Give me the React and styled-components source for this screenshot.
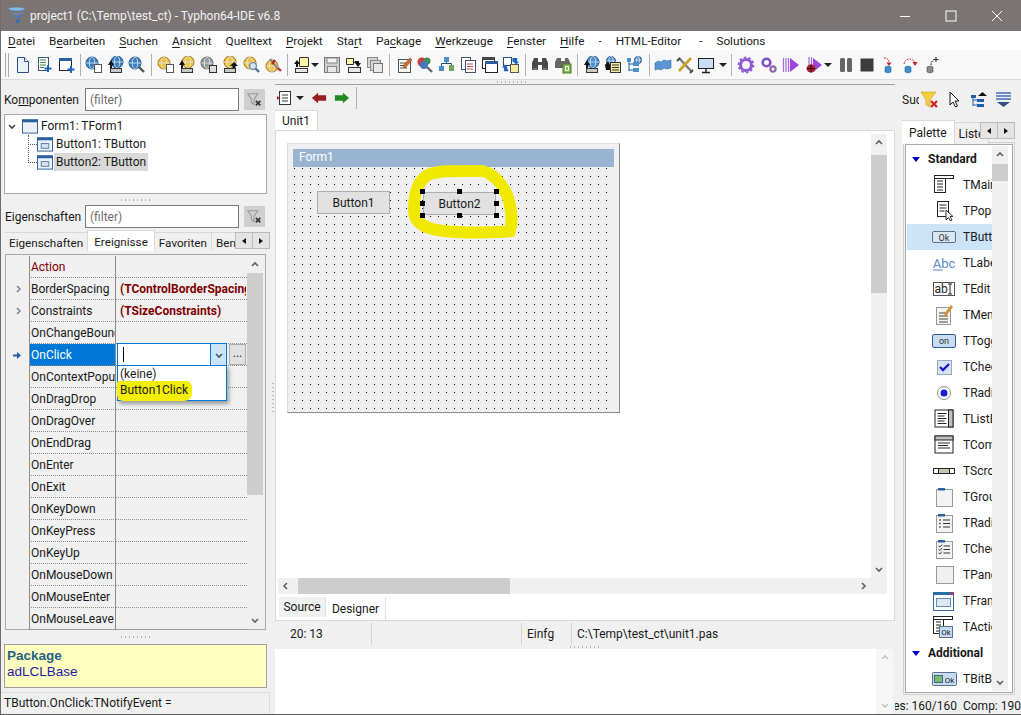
import React from 'react';
import styled, { createGlobalStyle } from 'styled-components';

const GlobalStyle = createGlobalStyle`
  html, body {
    margin: 0;
    padding: 0;
    background: #f0f0f0;
  }
  * {
    box-sizing: border-box;
  }
`;

const UI_FONT = `Roboto, "Open Sans", sans-serif`;

// ---- small drawing helpers for the toolbar icons

const Page = ({ x = 3, y = 1, w = 10, h = 14, fill = '#fff', stroke = '#44546a' }) => (
  <rect x={x + 0.5} y={y + 0.5} width={w} height={h} fill={fill} stroke={stroke} />
);
const Ball = ({ x = 7, y = 7, r = 6, fill = '#3f7fc0', stroke = '#1f4f85' }) => (
  <>
    <circle cx={x} cy={y} r={r} fill={fill} stroke={stroke} />
    <ellipse cx={x} cy={y} rx={r * 0.45} ry={r} fill="none" stroke="#dbe9f7" strokeWidth="0.8" />
    <path d={`M${x - r} ${y}h${r * 2}`} stroke="#dbe9f7" strokeWidth="0.8" />
  </>
);
const Drive = () => <rect x="3.5" y="12.5" width="11" height="4" fill="#c8c8c8" stroke="#333" />;
const SmallDoc = () => <rect x="9.5" y="8.5" width="7" height="8" fill="#fff" stroke="#555" />;
const YELLOW = { fill: '#f0c040', stroke: '#a36f10' };

const TOOL_ICONS = {
  newFile: (
    <>
      <path d="M3.5 1.5h7l4 4v11h-11z" fill="#eaf3fb" stroke="#24508a" />
      <path d="M10.5 1.5v4h4" fill="#fff" stroke="#24508a" />
    </>
  ),
  newUnit: (
    <>
      <Page h={13} />
      <path d="M5 4h6M5 6.5h6M5 9h6M5 11.5h4" stroke="#3d8a45" />
      <path d="M13 9v7M9.5 12.5h7" stroke="#1e62c0" strokeWidth="2" />
    </>
  ),
  newForm: (
    <>
      <rect x="2.5" y="2.5" width="12" height="12" fill="#fff" stroke="#222" />
      <rect x="2" y="2" width="13" height="3" fill="#2c5f9e" />
      <path d="M14 10v7M10.5 13.5h7" stroke="#1e62c0" strokeWidth="2" />
    </>
  ),
  globe: (
    <>
      <Ball />
      <SmallDoc />
    </>
  ),
  globeOpen: (
    <>
      <Ball x={10} y={6} />
      <path d="M1 9l3-5 3 5H5v3H3V9z" fill="#111" />
      <Drive />
    </>
  ),
  globeFind: (
    <>
      <Ball />
      <path d="M11 11l5 5" stroke="#555" strokeWidth="2.4" />
    </>
  ),
  pkg: (
    <>
      <Ball {...YELLOW} />
      <SmallDoc />
    </>
  ),
  pkgOpen: (
    <>
      <Ball x={10} y={6} {...YELLOW} />
      <path d="M1 9l3-5 3 5H5v3H3V9z" fill="#111" />
      <Drive />
    </>
  ),
  pkgGrey: (
    <>
      <Ball fill="#9a9a9a" stroke="#555" />
      <rect x="9.5" y="9.5" width="7" height="7" fill="#ddd" stroke="#333" />
    </>
  ),
  pkgSave: (
    <>
      <Ball x={9} y={6} {...YELLOW} />
      <path d="M13 6l4 4h-2.5v2h-3v-2H9z" fill="#111" />
      <Drive />
    </>
  ),
  pkgFind: (
    <>
      <Ball {...YELLOW} />
      <path d="M11 11l5 5" stroke="#56708c" strokeWidth="2.4" />
      <circle cx="10" cy="10" r="3.5" fill="#cfe3f5" stroke="#56708c" />
    </>
  ),
  pkgTools: (
    <>
      <Ball x={8} y={10} {...YELLOW} />
      <path d="M6 3l9 11" stroke="#8a8a8a" strokeWidth="2.2" />
      <path d="M11 4l-3 4" stroke="#b03030" strokeWidth="2.4" />
      <path d="M14 12l3 3" stroke="#c53a3a" strokeWidth="2.4" />
    </>
  ),
  openMenu: (
    <>
      <path d="M6.5 1.5h9v9h-9z" fill="#fdf6a8" stroke="#333" />
      <path d="M1 8l3-4 3 4H5v3H3V8z" fill="#111" />
      <rect x="2.5" y="12.5" width="12" height="4" fill="#e8e8e8" stroke="#333" />
    </>
  ),
  save: (
    <>
      <rect x="1.5" y="1.5" width="15" height="15" fill="#cfcfcf" stroke="#777" />
      <rect x="4" y="2" width="10" height="5" fill="#f4f4f4" stroke="#888" />
      <rect x="4.5" y="10.5" width="9" height="6" fill="#e8e8e8" stroke="#888" />
    </>
  ),
  saveAs: (
    <>
      <path d="M1.5 2.5h7v6h-7z" fill="#fdf6a8" stroke="#333" />
      <path d="M10 5h4v2h2l-3 4-3-4h-1z" fill="#111" />
      <rect x="3.5" y="11.5" width="12" height="5" fill="#e8e8e8" stroke="#333" />
    </>
  ),
  saveAll: (
    <>
      <rect x="1.5" y="1.5" width="10" height="10" fill="#d5d5d5" stroke="#888" />
      <rect x="4.5" y="4.5" width="10" height="10" fill="#d5d5d5" stroke="#888" />
      <rect x="7.5" y="7.5" width="9" height="9" fill="#e8e8e8" stroke="#777" />
    </>
  ),
  edit: (
    <>
      <Page y={3} w={12} h={13} fill="#f7f7ee" />
      <path d="M5 7h7M5 9.5h7M5 12h7" stroke="#555" />
      <path d="M8 10l7-8 2 2-7 8z" fill="#d96d2c" stroke="#7a3a10" strokeWidth=".6" />
    </>
  ),
  inspect: (
    <>
      <circle cx="6" cy="6" r="4.5" fill="#c73f3f" />
      <circle cx="11" cy="5" r="3.5" fill="#3f8f4f" />
      <circle cx="8" cy="9" r="4" fill="#4479c0" />
      <path d="M11 11l5 5" stroke="#666" strokeWidth="2.4" />
    </>
  ),
  tree: (
    <>
      <rect x="6" y="1" width="5" height="5" fill="#4c8fc9" />
      <rect x="1" y="10" width="5" height="5" fill="#4c8fc9" />
      <rect x="11" y="9" width="5" height="6" fill="#73a95a" />
      <path d="M3.5 10V7.5h10V9M8.5 6v2" fill="none" stroke="#224e7c" />
    </>
  ),
  docs: (
    <>
      <Page x={2} y={1} w={9} h={12} />
      <Page x={6} y={4} w={10} h={12} />
      <path d="M8 8h6M8 10.5h6M8 13h6" stroke="#c0504d" />
    </>
  ),
  forms: (
    <>
      <rect x="1.5" y="1.5" width="12" height="11" fill="#fff" stroke="#222" />
      <rect x="1" y="1" width="13" height="3" fill="#444" />
      <rect x="4.5" y="5.5" width="12" height="11" fill="#fff" stroke="#222" />
      <rect x="4" y="5" width="13" height="3" fill="#2c5f9e" />
    </>
  ),
  toggle: (
    <>
      <rect x="1.5" y="1.5" width="8" height="8" fill="#fff" stroke="#1f4f85" />
      <rect x="8.5" y="8.5" width="8" height="8" fill="#f4e9a3" stroke="#555" />
      <path d="M11 2h5v4h2l-3 3-3-3h-1zM7 16H2v-4H0l3-3 3 3H5z" fill="#1e62c0" transform="scale(.95)" />
    </>
  ),
  binoculars: (
    <>
      <path d="M1 14V7l2-5h4v4h4V2h4l2 5v7h-6V9H7v5z" fill="#4a4a4a" />
      <path d="M2 13h4M12 13h4" stroke="#999" />
    </>
  ),
  binocularsB: (
    <>
      <path d="M1 12V6l2-4h4v3h4V2h3l2 4v2H9v4z" fill="#666" />
      <rect x="9" y="8" width="8" height="9" fill="#86b84f" stroke="#4f7d28" />
      <path d="M11.5 10.5h3v4h-3z" fill="none" stroke="#fff" />
    </>
  ),
  helpGlobe: (
    <>
      <Ball x={10} y={6} fill="#4c8fc9" />
      <path d="M1 9l3-5 3 5H5v3H3V9z" fill="#111" />
      <Drive />
    </>
  ),
  helpDoc: (
    <>
      <Ball x={7} y={5} r={4.5} fill="#4c8fc9" />
      <rect x="6.5" y="6.5" width="10" height="10" fill="#f4e9a3" stroke="#333" />
      <path d="M8 9h7M8 11.5h7M8 14h7" stroke="#333" />
      <path d="M1 9l3-4 2 4v5H2z" fill="#111" />
    </>
  ),
  helpTree: (
    <>
      <Ball x={12} y={4} r={3.5} fill="#4c8fc9" />
      <path d="M3 4v11M3 8h5M3 14h5" stroke="#2c5f9e" fill="none" />
      <rect x="1" y="2" width="4" height="4" fill="#4c8fc9" />
      <rect x="7" y="6" width="6" height="4" fill="#4c8fc9" />
      <rect x="7" y="12" width="6" height="4" fill="#4c8fc9" />
    </>
  ),
  waves: <path d="M1 7l3-2 3 1 3-2 3 1 4-1v8l-4 1-3-1-3 2-3-1-3 1z" fill="#5b95d3" stroke="#2f6db0" strokeWidth=".6" />,
  tools: (
    <>
      <path d="M3 2l13 14" stroke="#7d7d7d" strokeWidth="2.4" />
      <path d="M15 2L3 15" stroke="#c9a227" strokeWidth="2.6" />
      <path d="M1 5l3-3M14 17l3-3" stroke="#4a4a4a" strokeWidth="2" />
    </>
  ),
  monitor: (
    <>
      <rect x="1.5" y="2.5" width="15" height="10" fill="#c9def4" stroke="#222" />
      <path d="M9 13v3M5 16.5h8" stroke="#222" strokeWidth="1.4" />
    </>
  ),
  gear: (
    <>
      <circle cx="9" cy="9" r="5.5" fill="none" stroke="#8d5bd6" strokeWidth="3" />
      <circle cx="9" cy="9" r="7.5" fill="none" stroke="#8d5bd6" strokeWidth="1.8" strokeDasharray="2.4 2.3" />
    </>
  ),
  gears: (
    <>
      <circle cx="6.5" cy="6.5" r="3.8" fill="none" stroke="#7d4fc7" strokeWidth="2.6" />
      <circle cx="13" cy="13" r="2.6" fill="none" stroke="#8c6bb0" strokeWidth="2.2" />
    </>
  ),
  run: (
    <>
      <path d="M1.5 2v14M4 2v14M6.5 2v14" stroke="#a66be0" strokeWidth="1.2" />
      <path d="M8 2v14l9-7z" fill="#a044e0" />
    </>
  ),
  debug: (
    <>
      <path d="M4 1v12M6.5 1v12" stroke="#a66be0" strokeWidth="1.2" />
      <path d="M8 2v14l9-7z" fill="#a044e0" />
      <ellipse cx="6" cy="12.5" rx="4.5" ry="4" fill="#b0202a" />
      <path d="M6 8.5v8M2 12.5h8" stroke="#111" />
    </>
  ),
  pause: (
    <>
      <rect x="3" y="2" width="5" height="14" rx="1.5" fill="#666" />
      <rect x="10" y="2" width="5" height="14" rx="1.5" fill="#666" />
    </>
  ),
  stop: <rect x="2.5" y="2.5" width="13" height="13" fill="#3c3c3c" />,
  stepInto: (
    <>
      <path d="M4 2c4 0 5 2 5 5" fill="none" stroke="#c22" strokeDasharray="1.5 1.2" />
      <path d="M6.5 6.5h5L9 10z" fill="#c22" />
      <path d="M5 11l3-1 3 1v5l-3 1-3-1z" fill="#3f8fcf" stroke="#1f4f85" strokeWidth=".5" />
    </>
  ),
  stepOver: (
    <>
      <path d="M3 8c1-6 9-7 11-1" fill="none" stroke="#c22" strokeDasharray="1.5 1.2" />
      <path d="M11.5 6h5L14 10z" fill="#c22" />
      <path d="M4 11l3-1 3 1v5l-3 1-3-1z" fill="#3f8fcf" stroke="#1f4f85" strokeWidth=".5" />
    </>
  ),
  stepOut: (
    <>
      <path d="M8 9c0-3 2-5 4-6" fill="none" stroke="#222" strokeDasharray="1.5 1.2" />
      <path d="M13 1v5M10.5 3.5h5" stroke="#222" />
      <path d="M4 11l3-1 3 1v5l-3 1-3-1z" fill="#8a8a8a" stroke="#333" strokeWidth=".5" />
    </>
  ),
  viewList: (
    <>
      <rect x="2.5" y="2.5" width="11" height="13" fill="#fff" stroke="#333" />
      <path d="M5 6h6M5 9h6M5 12h6" stroke="#333" />
      <path d="M0 7l2.5 2L0 11z" fill="#a11" />
    </>
  ),
  back: <path d="M1 9l7-6v3h9v6H8v3z" fill="#9b1c1c" />,
  forward: <path d="M17 9l-7-6v3H1v6h9v3z" fill="#1f8a1f" />,
  filterClear: (
    <>
      <path d="M1 2h11L8 8v6l-3-2V8z" fill="none" stroke="#9a9a9a" strokeWidth="1.2" />
      <path d="M10 10l5 5M15 10l-5 5" stroke="#333" strokeWidth="1.8" />
    </>
  ),
  filterRed: (
    <>
      <path d="M1 1h15l-6 8v7l-4-2V9z" fill="#f2cf3b" stroke="#c9a227" strokeWidth=".6" />
      <path d="M11 10l6 6M17 10l-6 6" stroke="#d4211f" strokeWidth="2.2" />
    </>
  ),
  cursor: <path d="M5 1v13l3-3 2.5 5 2-1-2.5-5h4z" fill="#fff" stroke="#111" />,
  treeUp: (
    <>
      <path d="M8 5l4.5-4 4.5 4z" fill="#111" />
      <path d="M3 6v9M3 9h5M3 14h5" stroke="#1f5fa8" fill="none" />
      <rect x="1" y="4" width="5" height="3" fill="#1f5fa8" />
      <rect x="7" y="8" width="7" height="3" fill="#1f5fa8" />
      <rect x="7" y="13" width="7" height="3" fill="#1f5fa8" />
    </>
  ),
  listDown: (
    <>
      <path d="M1 2h15M1 5h15M1 8h15" stroke="#3f6fb5" strokeWidth="1.6" />
      <path d="M2 11h13l-6.5 5z" fill="#2c4f86" />
    </>
  ),
  tornado: (
    <>
      <path d="M0 1.5c4-1.5 13-1.500 17 0-2 3-14 3-17 0z" fill="#7dbcf0" />
      <path d="M2 5c4 2 10 2 14-.5-1 3.500-10 5-14 .5z" fill="#4f93d8" />
      <path d="M5 9c3 1 7 .5 9-1.500-1 3.500-6 5-9 1.500z" fill="#3a7cc6" />
      <path d="M8 12.500c2 .3 3.500-.3 4.500-1.500-.5 2.500-2 5-3.500 6z" fill="#2f6cb0" />
    </>
  ),
};

// an array in a group is a drop-down arrow: [margin-left, margin-right]
const TOOLS = [
  ['newFile', 'newUnit', 'newForm'],
  ['globe', 'globeOpen', 'globeFind'],
  ['pkg', 'pkgOpen', 'pkgGrey', 'pkgSave', 'pkgFind', 'pkgTools'],
  ['openMenu', [-2, 3], 'save', 'saveAs', 'saveAll'],
  ['edit', 'inspect', 'tree', 'docs', 'forms', 'toggle'],
  ['binoculars', 'binocularsB'],
  ['helpGlobe', 'helpDoc', 'helpTree'],
  ['waves', 'tools', 'monitor', [2, 1]],
  ['gear', 'gears', 'run', 'debug', [-1, 3], 'pause', 'stop', 'stepInto', 'stepOver', 'stepOut'],
];

const WIDE_TOOLS = ['gear', 'gears', 'run', 'debug', 'binoculars', 'binocularsB'];

const MENU = [
  ['', 'D', 'atei'],
  ['B', 'e', 'arbeiten'],
  ['', 'S', 'uchen'],
  ['', 'A', 'nsicht'],
  ['Quelltext'],
  ['', 'P', 'rojekt'],
  ['Sta', 'r', 't'],
  ['Pa', 'c', 'kage'],
  ['', 'W', 'erkzeuge'],
  ['', 'F', 'enster'],
  ['', 'H', 'ilfe'],
  ['-'],
  ['HTML-Editor'],
  ['-'],
  ['Solutions'],
];

const EVENTS = [
  { name: 'Action', action: true },
  { name: 'BorderSpacing', value: '(TControlBorderSpacing)', more: true },
  { name: 'Constraints', value: '(TSizeConstraints)', more: true },
  { name: 'OnChangeBounds' },
  { name: 'OnClick', selected: true },
  { name: 'OnContextPopup' },
  { name: 'OnDragDrop' },
  { name: 'OnDragOver' },
  { name: 'OnEndDrag' },
  { name: 'OnEnter' },
  { name: 'OnExit' },
  { name: 'OnKeyDown' },
  { name: 'OnKeyPress' },
  { name: 'OnKeyUp' },
  { name: 'OnMouseDown' },
  { name: 'OnMouseEnter' },
  { name: 'OnMouseLeave' },
];

const PALETTE = [
  { header: 'Standard' },
  { name: 'TMainMenu', icon: 'main' },
  { name: 'TPopupMenu', icon: 'popup' },
  { name: 'TButton', icon: 'ok', selected: true },
  { name: 'TLabel', icon: 'abc' },
  { name: 'TEdit', icon: 'edit' },
  { name: 'TMemo', icon: 'memo' },
  { name: 'TToggleBox', icon: 'on' },
  { name: 'TCheckBox', icon: 'check' },
  { name: 'TRadioButton', icon: 'radio' },
  { name: 'TListBox', icon: 'list' },
  { name: 'TComboBox', icon: 'combo' },
  { name: 'TScrollBar', icon: 'scroll' },
  { name: 'TGroupBox', icon: 'group' },
  { name: 'TRadioGroup', icon: 'rgroup' },
  { name: 'TCheckGroup', icon: 'cgroup' },
  { name: 'TPanel', icon: 'panel' },
  { name: 'TFrame', icon: 'frame' },
  { name: 'TActionList', icon: 'action' },
  { header: 'Additional' },
  { name: 'TBitBtn', icon: 'bitbtn' },
];

const PALETTE_ICONS = {
  main: (
    <>
      <rect x="4.5" y="3.5" width="11" height="17" fill="#fff" stroke="#222" />
      <rect x="4.5" y="3.5" width="19" height="3" fill="#fff" stroke="#222" />
      <path d="M7 9h6M7 12h6M7 15h6M7 18h6" stroke="#222" />
    </>
  ),
  popup: (
    <>
      <rect x="7.5" y="3.5" width="11" height="15" fill="#fff" stroke="#222" />
      <path d="M9.5 7h7M9.5 10h7M9.5 13h5" stroke="#222" />
      <path d="M16 12v10l2.5-2.5 2 3.5 1.5-1-2-3.500h3z" fill="#fff" stroke="#333" />
    </>
  ),
  ok: (
    <>
      <rect x="2.5" y="7.5" width="23" height="11" rx="1.5" fill="#dbe7f3" stroke="#5a7186" />
      <text x="14" y="16.500" fontSize="9" textAnchor="middle" fill="#333">Ok</text>
    </>
  ),
  abc: (
    <>
      <text x="14" y="18" fontSize="13" textAnchor="middle" fill="#5a8ac6">Abc</text>
      <path d="M3 20h10" stroke="#5a8ac6" />
    </>
  ),
  edit: (
    <>
      <rect x="3.5" y="6.5" width="21" height="13" fill="#fff" stroke="#555" />
      <text x="4.5" y="17" fontSize="12" fill="#222">ab</text>
      <path d="M18 8h4M18 18h4M20 8v10" stroke="#222" />
    </>
  ),
  memo: (
    <>
      <rect x="6.5" y="5.5" width="14" height="17" fill="#f5f5ee" stroke="#8a9aaa" />
      <path d="M9 11h9M9 14h9M9 17h9M9 20h9" stroke="#444" />
      <path d="M14 12l7-9 2 2-7 9z" fill="#d98c2c" />
    </>
  ),
  on: (
    <>
      <rect x="2.5" y="6.5" width="23" height="13" rx="1.5" fill="#c5dcf3" stroke="#2c5f8a" />
      <text x="14" y="16" fontSize="9" textAnchor="middle" fill="#333">on</text>
    </>
  ),
  check: (
    <>
      <rect x="7.5" y="6.5" width="14" height="14" fill="#d4e3f5" stroke="#9aa8b8" />
      <path d="M10 13l3 3 6-6" fill="none" stroke="#1a1ac0" strokeWidth="2.4" />
    </>
  ),
  radio: (
    <>
      <circle cx="14" cy="13" r="6.5" fill="#fff" stroke="#8a8a8a" />
      <circle cx="14" cy="13" r="3.5" fill="#1a1ac8" />
    </>
  ),
  list: (
    <>
      <rect x="5" y="4" width="18" height="17" fill="#fff" stroke="#222" />
      <path d="M7.5 7.5h9M7.5 10h7M7.5 12.5h9M7.5 15h7M7.5 17.5h9" stroke="#222" />
      <rect x="18.5" y="4" width="4.5" height="17" fill="#c4c0b4" stroke="#222" />
    </>
  ),
  combo: (
    <>
      <rect x="5" y="4" width="18" height="17" fill="#fff" stroke="#222" />
      <rect x="5" y="4" width="18" height="4" fill="#c4c0b4" stroke="#222" />
      <path d="M8 11h12M8 13.5h10M8 16h12" stroke="#222" />
    </>
  ),
  scroll: (
    <>
      <rect x="3.5" y="10.5" width="21" height="5" fill="#c9c5b8" stroke="#222" />
      <rect x="3.5" y="10.5" width="5" height="5" fill="#fff" stroke="#222" />
      <rect x="19.5" y="10.5" width="5" height="5" fill="#fff" stroke="#222" />
    </>
  ),
  group: (
    <>
      <rect x="6.5" y="5.5" width="16" height="17" fill="#f3f3f3" stroke="#999" />
      <rect x="8" y="4" width="7" height="2.5" fill="#2c5f9e" />
    </>
  ),
  rgroup: (
    <>
      <rect x="6.5" y="5.5" width="16" height="17" fill="#f3f3f3" stroke="#999" />
      <rect x="8" y="4" width="7" height="2.5" fill="#2c5f9e" />
      <path d="M13 10h7M13 13.5h7M13 17h7" stroke="#333" />
      <circle cx="10" cy="10" r="1" fill="#667" />
      <circle cx="10" cy="13.5" r="1" fill="#667" />
      <circle cx="10" cy="17" r="1" fill="#667" />
    </>
  ),
  cgroup: (
    <>
      <rect x="6.5" y="5.5" width="16" height="17" fill="#f3f3f3" stroke="#999" />
      <rect x="8" y="4" width="7" height="2.5" fill="#2c5f9e" />
      <path d="M13.5 10h6.5M13.5 13.5h6.5M13.5 17h6.5" stroke="#333" />
      <path d="M8.5 10l1.5 1 2-2.5M8.5 13.5l1.5 1 2-2.5M8.5 17l1.5 1 2-2.5" fill="none" stroke="#444" />
    </>
  ),
  panel: <rect x="6.5" y="4.5" width="17" height="17" fill="#f0f0f0" stroke="#999" />,
  frame: (
    <>
      <rect x="3.5" y="4.5" width="20" height="18" fill="#fff" stroke="#2c6ca8" />
      <rect x="3" y="4" width="21" height="3" fill="#2c6ca8" />
      <rect x="6.5" y="10.5" width="14" height="8" fill="#dbe7f3" stroke="#6a8aaa" />
      <rect x="21" y="4" width="3" height="3" fill="#a6395a" />
    </>
  ),
  action: (
    <>
      <rect x="3.5" y="2.5" width="10" height="17" fill="#fff" stroke="#222" />
      <rect x="3.5" y="2.5" width="19" height="3" fill="#fff" stroke="#222" />
      <path d="M6 8h5M6 11h5M6 14h5M6 17h5" stroke="#222" />
      <rect x="9.5" y="12.5" width="13" height="11" fill="#c5dcf3" stroke="#5a7186" />
      <text x="16" y="21" fontSize="8" textAnchor="middle" fill="#222">Ok</text>
    </>
  ),
  bitbtn: (
    <>
      <rect x="2.5" y="6.5" width="24" height="13" rx="1" fill="#c5dcf3" stroke="#5a7186" />
      <rect x="4.5" y="9.5" width="8" height="7" fill="#7dbb6a" stroke="#3a6a8a" />
      <text x="19.5" y="16.5" fontSize="8" textAnchor="middle" fill="#222">Ok</text>
    </>
  ),
};

const CHEVRONS = {
  up: 'M3 7l3-3 3 3',
  down: 'M3 5l3 3 3-3',
  left: 'M7 3L4 6l3 3',
  right: 'M5 3l3 3-3 3',
};

const ChevronSvg = styled.svg`
  flex: none;
  margin-right: ${(p) => p.$after || 0}px;
`;

const Chevron = ({ dir, color = '#606060', after }) => (
  <ChevronSvg width="12" height="12" viewBox="0 0 12 12" $after={after}>
    <path d={CHEVRONS[dir]} fill="none" stroke={color} strokeWidth="1.6" />
  </ChevronSvg>
);

const Icon = ({ name, size = 18 }) => (
  <svg width={size} height={size} viewBox="0 0 18 18">
    {TOOL_ICONS[name]}
  </svg>
);

const WindowIcon = ({ small }) => (
  <svg width="16" height="15" viewBox="0 0 17 15">
    <rect x=".5" y=".5" width="16" height="14" fill="#eaf1f8" stroke="#2c5f9e" />
    <rect x="0" y="0" width="17" height="3" fill="#2c5f9e" />
    {small && <rect x="4.5" y="6.5" width="8" height="5" fill="#d5e2f0" stroke="#5a7ea6" />}
  </svg>
);

const Root = styled.div`
  width: 1021px;
  height: 715px;
  display: flex;
  flex-direction: column;
  overflow: hidden;
  background: #f0f0f0;
  color: #1a1a1a;
  font-family: ${UI_FONT};
  font-size: 12px;
  border-left: 1px solid #6f6b6a;
  border-bottom: 1px solid #5c5a59;
`;

const TitleBar = styled.div`
  height: 31px;
  flex: none;
  display: flex;
  align-items: center;
  padding: 0 1px 0 7px;
  background: #7a7574;
  color: #f2f2f2;
`;

const TitleText = styled.span`
  margin-left: 4px;
  flex: 1;
`;

const WinButton = styled.span`
  width: 46px;
  height: 31px;
  display: flex;
  align-items: center;
  justify-content: center;
`;

const MenuBar = styled.div`
  height: 19px;
  flex: none;
  display: flex;
  align-items: center;
  gap: 14px;
  padding-left: 7px;
  font-size: 11.75px;
  background: #fff;
  u {
    text-underline-offset: 2px;
  }
`;

const MenuItem = styled.span`
  margin-left: ${(p) => p.$extra || 0}px;
`;

const ToolBar = styled.div`
  height: 30px;
  flex: none;
  display: flex;
  align-items: center;
  padding-left: 4px;
  background: #f8f8f8;
  border-bottom: 1px solid #dcdcdc;
`;

const Grip = styled.span`
  width: 4px;
  height: 24px;
  margin-right: 3px;
  border-left: 1px solid #aaa;
  border-right: 1px solid #aaa;
`;

const Tool = styled.span`
  width: ${(p) => (p.$wide ? 22.5 : 21.5)}px;
  height: 22px;
  flex: none;
  display: flex;
  align-items: center;
  justify-content: center;
`;

const DropArrow = styled.span`
  width: 8px;
  height: 0;
  flex: none;
  margin-left: ${(p) => p.$left}px;
  margin-right: ${(p) => p.$right}px;
  border-left: 4px solid transparent;
  border-right: 4px solid transparent;
  border-top: 4px solid #222;
`;

const ToolSep = styled.span`
  width: 1px;
  height: 22px;
  flex: none;
  margin: 0 3px;
  background: #b0b0b0;
`;

const Body = styled.div`
  flex: 1;
  min-height: 0;
  display: flex;
`;

const LeftColumn = styled.div`
  width: 269px;
  flex: none;
  display: flex;
  flex-direction: column;
  padding-top: 8px;
`;

const FilterRow = styled.div`
  height: 24px;
  flex: none;
  display: flex;
  align-items: flex-start;
  line-height: 24px;
  margin-left: ${(p) => p.$indent}px;
  padding-right: 5px;
`;

const FilterLabel = styled.span`
  flex: 1;
  white-space: nowrap;
`;

const FilterInput = styled.div`
  width: 154px;
  height: 23px;
  display: flex;
  align-items: center;
  padding-left: 4px;
  background: #fff;
  border: 1px solid #7a7a7a;
  color: #6d6d6d;
`;

const FilterButton = styled.span`
  width: 21px;
  height: 21px;
  margin: 1px 0 0 5px;
  display: flex;
  align-items: center;
  justify-content: center;
  background: #cfcfcf;
`;

const Tree = styled.div`
  height: 80px;
  flex: none;
  margin: 2px 3px 0 3px;
  padding-top: 2px;
  background: #fff;
  border: 1px solid #a8a8a8;
`;

const TreeRow = styled.div`
  height: 18px;
  display: flex;
  align-items: center;
  gap: 1px;
  padding-left: ${(p) => p.$indent}px;
  position: relative;
  &::before {
    content: ${(p) => (p.$branch ? '""' : 'none')};
    position: absolute;
    left: 23px;
    top: ${(p) => (p.$last ? '-9px' : '0')};
    width: 8px;
    height: ${(p) => (p.$last ? '18px' : '9px')};
    border-left: 1px dotted #555;
    border-bottom: 1px dotted #555;
  }
`;

const TreeLabel = styled.span`
  padding: 0 2px;
  line-height: 18px;
  background: ${(p) => (p.$selected ? '#d9d9d9' : 'transparent')};
`;

const HSplitter = styled.div`
  height: ${(p) => p.$height}px;
  flex: none;
  display: flex;
  align-items: center;
  justify-content: ${(p) => (p.$offset ? 'flex-start' : 'center')};
  padding-left: ${(p) => p.$offset || 0}px;
`;

const SplitGrip = styled.span`
  width: 30px;
  height: 2px;
  background: repeating-linear-gradient(90deg, #b5b5b5 0 1px, transparent 1px 4px);
`;

const VSplitter = styled.div`
  width: 5px;
  flex: none;
  display: flex;
  align-items: center;
  justify-content: center;
`;

const VGrip = styled.span`
  width: 2px;
  height: 30px;
  background: repeating-linear-gradient(0deg, #b5b5b5 0 1px, transparent 1px 4px);
`;

const TabStrip = styled.div`
  flex: none;
  height: ${(p) => p.$height}px;
  display: flex;
  align-items: flex-end;
  position: relative;
  overflow: hidden;
  margin-left: ${(p) => p.$left || 0}px;
  margin-top: ${(p) => p.$top || 0}px;
  font-size: ${(p) => p.$size || 12}px;
`;

const Tab = styled.div`
  height: ${(p) => (p.$active ? '100%' : 'calc(100% - 2px)')};
  padding: 1px ${(p) => p.$pad || 4}px 0;
  display: flex;
  align-items: center;
  white-space: nowrap;
  background: ${(p) => (p.$active ? '#fff' : '#f0f0f0')};
  border: 1px solid #d9d9d9;
  border-bottom: none;
  margin-left: -1px;
`;

const TabArrows = styled.div`
  position: absolute;
  right: ${(p) => p.$right}px;
  top: 2px;
  display: flex;
`;

const TabArrow = styled.span`
  width: 18px;
  height: 17px;
  display: flex;
  align-items: center;
  justify-content: center;
  background: #e4e4e4;
  border: 1px solid #bbb;
  margin-left: -1px;
  &::after {
    content: '';
    border-top: 3px solid transparent;
    border-bottom: 3px solid transparent;
    ${(p) => (p.$dir === 'left' ? 'border-right: 4px solid #111;' : 'border-left: 4px solid #111;')}
  }
`;

const GridFrame = styled.div`
  height: 376px;
  flex: none;
  margin: 3px 4px 0 4px;
  padding-top: 1px;
  display: flex;
  background: #f0f0f0;
  border: 1px solid #a8a8a8;
`;

const GridRows = styled.div`
  width: 241px;
  flex: none;
`;

const GridRow = styled.div`
  height: 22px;
  display: grid;
  grid-template-columns: 23px 87px 131px;
`;

const GutterCell = styled.div`
  display: flex;
  align-items: center;
  justify-content: center;
`;

const NameCell = styled.div`
  padding: 1px 0 0 1px;
  line-height: 20px;
  overflow: hidden;
  white-space: nowrap;
  border-left: 1px solid #8c8c8c;
  border-right: 1px solid #8c8c8c;
  border-bottom: 1px dotted #8c8c8c;
  color: ${(p) => (p.$selected ? '#fff' : p.$action ? '#800000' : 'inherit')};
  background: ${(p) => (p.$selected ? '#0078d7' : 'transparent')};
`;

const ValueCell = styled.div`
  position: relative;
  padding: 1px 0 0 4px;
  line-height: 20px;
  white-space: nowrap;
  border-bottom: 1px dotted #8c8c8c;
  color: #800000;
  font-weight: 700;
  & > span {
    display: block;
    max-width: 126px;
    overflow: hidden;
  }
`;

const Combo = styled.div`
  position: absolute;
  left: 1px;
  top: -1px;
  width: 110px;
  height: 23px;
  display: flex;
  background: #fff;
  border: 1px solid #0078d7;
  z-index: 2;
`;

const Caret = styled.span`
  width: 1px;
  height: 15px;
  margin: 3px 0 0 5px;
  background: #000;
`;

const ComboButton = styled.span`
  width: 16px;
  margin-left: auto;
  display: flex;
  align-items: center;
  justify-content: center;
  background: #cce4f7;
  border-left: 1px solid #0078d7;
`;

const EllipsisButton = styled.span`
  position: absolute;
  left: 113px;
  top: 0;
  width: 17px;
  height: 21px;
  text-align: center;
  line-height: 17px;
  font-weight: 400;
  color: #222;
  background: #e1e1e1;
  border: 1px solid #adadad;
`;

const DropList = styled.div`
  position: absolute;
  left: 1px;
  top: 21px;
  width: 110px;
  height: 36px;
  padding-left: 2px;
  background: #fff;
  border: 1px solid #0078d7;
  box-shadow: 2px 3px 4px rgba(0, 0, 0, 0.35);
  color: #1a1a1a;
  font-weight: 400;
  line-height: 16px;
  z-index: 2;
`;

const DropItem = styled.div`
  position: relative;
`;

const Highlight = styled.span`
  position: absolute;
  left: -3px;
  top: -1px;
  width: 75px;
  height: 20px;
  background: #f4ee00;
  border-radius: 2px 6px 8px 6px;
  z-index: -1;
`;

const Scroll = styled.div`
  display: flex;
  flex-direction: ${(p) => (p.$horizontal ? 'row' : 'column')};
  align-items: center;
  justify-content: space-between;
  flex: none;
  background: ${(p) => p.$bg || '#f0f0f0'};
  position: relative;
  ${(p) => (p.$horizontal ? 'height: 16px;' : `width: ${p.$width || 16}px;`)}
  ${(p) => (p.$horizontal ? 'padding: 0 2px;' : 'padding: 3px 0;')}
`;

const ScrollThumb = styled.span`
  position: absolute;
  background: #cdcdcd;
  ${(p) =>
    p.$horizontal
      ? `top: 0; bottom: 0; left: ${p.$start}px; width: ${p.$size}px;`
      : `left: 0; right: 0; top: ${p.$start}px; height: ${p.$size}px;`}
`;

const Package = styled.div`
  height: 44px;
  flex: none;
  margin: 0 3px;
  padding: 3px 2px;
  background: #ffffc0;
  border: 1px solid #a0a0a0;
  font-family: "Liberation Sans", Arial, sans-serif;
  font-size: 13.5px;
  line-height: 15.5px;
  color: #1a1aaa;
  strong {
    display: block;
    color: #1f5f85;
  }
`;

const LeftStatus = styled.div`
  flex: 1;
  margin-top: 4px;
  padding: 3px 0 0 3px;
  border-top: 1px solid #dcdcdc;
  border-right: 1px solid #dcdcdc;
  white-space: nowrap;
`;

const CenterColumn = styled.div`
  width: 620px;
  flex: none;
  display: flex;
  flex-direction: column;
`;

const CenterBar = styled.div`
  height: 26px;
  flex: none;
  display: flex;
  align-items: center;
  padding-left: 2px;
  border-top: 1px solid #a0a0a0;
`;

const CenterTool = styled(Tool)`
  width: ${(p) => p.$width}px;
`;

const EditorPage = styled.div`
  height: 491px;
  flex: none;
  display: flex;
  flex-direction: column;
  padding: 3px 4px 0 2px;
  background: #fff;
  border: 1px solid #d9d9d9;
`;

const DesignArea = styled.div`
  width: 609px;
  height: 460px;
  flex: none;
  display: grid;
  grid-template-columns: 1fr 16px;
  grid-template-rows: 1fr 16px;
`;

const Canvas = styled.div`
  padding: 9px 0 0 9px;
  min-width: 0;
`;

const Corner = styled.div`
  background: #f0f0f0;
`;

const DesignForm = styled.div`
  position: relative;
  width: 333px;
  height: 270px;
  padding: 5px 5px 0;
  background: #f0f0f0;
  border: 1px solid #dedede;
  border-right: 1px solid #8c8c8c;
  border-bottom: 1px solid #8c8c8c;
`;

const FormCaption = styled.div`
  height: 18px;
  padding-left: 6px;
  line-height: 17px;
  background: #99b4d1;
  color: #fff;
`;

const DotGrid = styled.div`
  position: absolute;
  left: 5px;
  right: 5px;
  top: 23px;
  bottom: 0;
  background-image: radial-gradient(circle at 1.5px 1.5px, #111 0.45px, transparent 0.75px);
  background-size: 8px 8px;
`;

const FormButton = styled.div`
  position: absolute;
  left: ${(p) => p.$x}px;
  top: ${(p) => p.$y}px;
  width: 73px;
  height: 23px;
  display: flex;
  align-items: center;
  justify-content: center;
  background: #e1e1e1;
  border: 1px solid #adadad;
`;

const Handle = styled.span`
  position: absolute;
  width: 5px;
  height: 5px;
  background: #000;
  left: ${(p) => p.$x}px;
  top: ${(p) => p.$y}px;
`;

const Scribble = styled.svg`
  position: absolute;
  left: -1px;
  top: -1px;
  pointer-events: none;
`;

const PageTabs = styled.div`
  display: flex;
  height: 23px;
  margin: 3px 0 0 1px;
`;

const PageTab = styled.div`
  width: ${(p) => p.$width}px;
  height: ${(p) => (p.$active ? '23px' : '20px')};
  display: flex;
  align-items: center;
  justify-content: center;
  background: ${(p) => (p.$active ? '#fff' : '#f0f0f0')};
  border-right: 1px solid #e0e0e0;
`;

const EditorStatus = styled.div`
  height: 22px;
  flex: none;
  margin-top: 2px;
  display: grid;
  grid-template-columns: 97px 150px 50px 1fr;
  align-items: stretch;
`;

const StatusCell = styled.div`
  display: flex;
  align-items: center;
  padding-left: ${(p) => p.$pad || 4}px;
  border-right: ${(p) => (p.$last ? 'none' : '1px solid #d4d4d4')};
`;

const MessageBox = styled.div`
  flex: 1;
  min-height: 0;
  display: flex;
  justify-content: flex-end;
  background: #fff;
  margin-right: 2px;
`;

const RightColumn = styled.div`
  flex: 1;
  min-width: 0;
  display: flex;
  flex-direction: column;
  padding-top: 5px;
`;

const RightTools = styled.div`
  height: 30px;
  flex: none;
  display: flex;
  align-items: center;
  padding-left: 7px;
`;

const SearchStub = styled.span`
  width: 17px;
  overflow: hidden;
  white-space: nowrap;
`;

const RightTool = styled.span`
  width: 25px;
  display: flex;
  justify-content: center;
  margin-left: ${(p) => p.$gap || 0}px;
`;

const PaletteFrame = styled.div`
  height: 549px;
  flex: none;
  margin: 0 8px 0 10px;
  padding: 1px;
  display: flex;
  background: #fff;
  border: 1px solid #a8a8a8;
  outline: 1px solid #d0d0d0;
  outline-offset: 1px;
`;

const PaletteList = styled.div`
  width: 85px;
  flex: none;
  overflow: hidden;
`;

const PaletteRow = styled.div`
  height: 26px;
  display: flex;
  align-items: center;
  gap: 4px;
  padding-left: 23px;
  white-space: nowrap;
  background: ${(p) => (p.$selected ? '#cce4f7' : 'transparent')};
`;

const PaletteIcon = styled.svg`
  flex: none;
`;

const PaletteHeader = styled.div`
  height: 26px;
  display: flex;
  align-items: center;
  gap: 8px;
  padding-left: 5px;
  font-weight: 700;
  white-space: nowrap;
  &::before {
    content: '';
    border-left: 4.5px solid transparent;
    border-right: 4.5px solid transparent;
    border-top: 5px solid #0000c8;
  }
`;

const RightStatus = styled.div`
  flex: 1;
  display: flex;
  justify-content: flex-end;
  align-items: center;
  overflow: hidden;
  white-space: pre;
  margin-top: 4px;
`;

export default function App() {
  return (
    <Root>
      <GlobalStyle />
      <TitleBar>
        <Icon name="tornado" />
        <TitleText>project1 (C:\Temp\test_ct) - Typhon64-IDE v6.8</TitleText>
        <WinButton>
          <svg width="12" height="12" viewBox="0 0 12 12">
            <path d="M1 6.5h10" stroke="#fff" />
          </svg>
        </WinButton>
        <WinButton>
          <svg width="12" height="12" viewBox="0 0 12 12">
            <rect x="1" y="1" width="10" height="10" fill="none" stroke="#fff" />
          </svg>
        </WinButton>
        <WinButton>
          <svg width="12" height="12" viewBox="0 0 12 12">
            <path d="M1 1l10 10M11 1L1 11" stroke="#fff" />
          </svg>
        </WinButton>
      </TitleBar>

      <MenuBar>
        {MENU.map(([pre, mark, post], i) => (
          <MenuItem key={i} $extra={i === 13 ? 4 : 0}>
            {pre}
            {mark && <u>{mark}</u>}
            {post}
          </MenuItem>
        ))}
      </MenuBar>

      <ToolBar>
        <Grip />
        {TOOLS.map((group, g) => (
          <React.Fragment key={g}>
            {g > 0 && <ToolSep />}
            {group.map((name, i) =>
              Array.isArray(name) ? (
                <DropArrow key={i} $left={name[0]} $right={name[1]} />
              ) : (
                <Tool key={i} $wide={WIDE_TOOLS.includes(name)}>
                  <Icon name={name} />
                </Tool>
              )
            )}
          </React.Fragment>
        ))}
      </ToolBar>

      <Body>
        <LeftColumn>
          <FilterRow $indent={3}>
            <FilterLabel>
              Ko<u>m</u>ponenten
            </FilterLabel>
            <FilterInput>(filter)</FilterInput>
            <FilterButton>
              <Icon name="filterClear" size={16} />
            </FilterButton>
          </FilterRow>
          <Tree>
            <TreeRow $indent={1}>
              <Chevron dir="down" color="#444" after={3} />
              <WindowIcon />
              <TreeLabel>Form1: TForm1</TreeLabel>
            </TreeRow>
            <TreeRow $indent={32} $branch>
              <WindowIcon small />
              <TreeLabel>Button1: TButton</TreeLabel>
            </TreeRow>
            <TreeRow $indent={32} $branch $last>
              <WindowIcon small />
              <TreeLabel $selected>Button2: TButton</TreeLabel>
            </TreeRow>
          </Tree>
          <HSplitter $height={11}>
            <SplitGrip />
          </HSplitter>
          <FilterRow $indent={4}>
            <FilterLabel>Eigenschaften</FilterLabel>
            <FilterInput>(filter)</FilterInput>
            <FilterButton>
              <Icon name="filterClear" size={16} />
            </FilterButton>
          </FilterRow>
          <TabStrip $height={21} $left={4} $top={1} $size={11.7}>
            <Tab>Eigenschaften</Tab>
            <Tab $active $pad={6}>
              Ereignisse
            </Tab>
            <Tab>Favoriten</Tab>
            <Tab>Benutzer</Tab>
            <TabArrows $right={0}>
              <TabArrow $dir="left" />
              <TabArrow $dir="right" />
            </TabArrows>
          </TabStrip>
          <GridFrame>
            <GridRows>
              {EVENTS.map((row) => (
                <GridRow key={row.name}>
                  <GutterCell>
                    {row.more && <Chevron dir="right" color="#888" />}
                    {row.selected && (
                      <svg width="9" height="7" viewBox="0 0 9 7">
                        <path d="M0 2.5h4V0l4 3.5L4 7V4.5H0z" fill="#2c5fa8" />
                      </svg>
                    )}
                  </GutterCell>
                  <NameCell $selected={row.selected} $action={row.action}>
                    {row.name}
                  </NameCell>
                  <ValueCell>
                    <span>{row.value}</span>
                    {row.selected && (
                      <>
                        <Combo>
                          <Caret />
                          <ComboButton>
                            <Chevron dir="down" color="#3a5a78" />
                          </ComboButton>
                        </Combo>
                        <EllipsisButton>...</EllipsisButton>
                        <DropList>
                          <DropItem>(keine)</DropItem>
                          <DropItem>
                            <Highlight />
                            Button1Click
                          </DropItem>
                        </DropList>
                      </>
                    )}
                  </ValueCell>
                </GridRow>
              ))}
            </GridRows>
            <Scroll>
              <ScrollThumb $start={17} $size={222} />
              <Chevron dir="up" />
              <Chevron dir="down" />
            </Scroll>
          </GridFrame>
          <HSplitter $height={14}>
            <SplitGrip />
          </HSplitter>
          <Package>
            <strong>Package</strong>
            adLCLBase
          </Package>
          <LeftStatus>TButton.OnClick:TNotifyEvent =</LeftStatus>
        </LeftColumn>

        <VSplitter>
          <VGrip />
        </VSplitter>

        <CenterColumn>
          <HSplitter $height={4} $offset={222}>
            <SplitGrip />
          </HSplitter>
          <CenterBar>
            <CenterTool $width={18}>
              <Icon name="viewList" />
            </CenterTool>
            <DropArrow $left={1} $right={4} />
            <CenterTool $width={22}>
              <Icon name="back" size={16} />
            </CenterTool>
            <CenterTool $width={23}>
              <Icon name="forward" size={16} />
            </CenterTool>
            <ToolSep />
          </CenterBar>
          <TabStrip $height={20}>
            <Tab $active $pad={7}>
              Unit1
            </Tab>
          </TabStrip>
          <EditorPage>
            <DesignArea>
              <Canvas>
                <DesignForm>
                  <FormCaption>Form1</FormCaption>
                  <DotGrid />
                  <FormButton $x={29} $y={47}>
                    Button1
                  </FormButton>
                  <FormButton $x={135} $y={48}>
                    Button2
                  </FormButton>
                  <Scribble width="333" height="270" viewBox="287 143 333 270">
                    <path
                      d="M483 171C460 171 438 170 428 175C417 181 414 195 414 210C414 222 424 229 444 231C465 233 495 233 510 231C513 222 511 205 507 195C503 186 498 178 488 173"
                      fill="none"
                      stroke="#f2e900"
                      strokeWidth="12"
                      strokeLinecap="round"
                    />
                  </Scribble>
                  <Handle $x={132} $y={45} />
                  <Handle $x={169} $y={45} />
                  <Handle $x={206} $y={45} />
                  <Handle $x={132} $y={57} />
                  <Handle $x={206} $y={57} />
                  <Handle $x={132} $y={69} />
                  <Handle $x={169} $y={69} />
                  <Handle $x={206} $y={69} />
                </DesignForm>
              </Canvas>
              <Scroll>
                <ScrollThumb $start={21} $size={138} />
                <Chevron dir="up" />
                <Chevron dir="down" />
              </Scroll>
              <Scroll $horizontal>
                <ScrollThumb $horizontal $start={20} $size={212} />
                <Chevron dir="left" />
                <Chevron dir="right" />
              </Scroll>
              <Corner />
            </DesignArea>
            <PageTabs>
              <PageTab $width={47}>Source</PageTab>
              <PageTab $width={60} $active>
                Designer
              </PageTab>
            </PageTabs>
          </EditorPage>
          <EditorStatus>
            <StatusCell $pad={15}>20: 13</StatusCell>
            <StatusCell />
            <StatusCell $pad={5}>Einfg</StatusCell>
            <StatusCell $pad={5} $last>
              C:\Temp\test_ct\unit1.pas
            </StatusCell>
          </EditorStatus>
          <HSplitter $height={4}>
            <SplitGrip />
          </HSplitter>
          <MessageBox>
            <Scroll $width={17} $bg="#f7f7f7">
              <Chevron dir="up" color="#c4c4c4" />
              <Chevron dir="down" color="#c4c4c4" />
            </Scroll>
          </MessageBox>
        </CenterColumn>

        <RightColumn>
          <RightTools>
            <SearchStub>Suche</SearchStub>
            <RightTool $gap={-3}>
              <Icon name="filterRed" />
            </RightTool>
            <RightTool>
              <Icon name="cursor" />
            </RightTool>
            <RightTool>
              <Icon name="treeUp" />
            </RightTool>
            <RightTool>
              <Icon name="listDown" />
            </RightTool>
          </RightTools>
          <TabStrip $height={24} $left={7} $top={5}>
            <Tab $active $pad={7}>
              Palette
            </Tab>
            <Tab>Liste</Tab>
            <TabArrows $right={6}>
              <TabArrow $dir="left" />
              <TabArrow $dir="right" />
            </TabArrows>
          </TabStrip>
          <PaletteFrame>
            <PaletteList>
              {PALETTE.map((item) =>
                item.header ? (
                  <PaletteHeader key={item.header}>{item.header}</PaletteHeader>
                ) : (
                  <PaletteRow key={item.name} $selected={item.selected}>
                    <PaletteIcon width="29" height="26" viewBox="0 0 29 26" fontFamily={UI_FONT}>
                      {PALETTE_ICONS[item.icon]}
                    </PaletteIcon>
                    <span>{item.name}</span>
                  </PaletteRow>
                )
              )}
            </PaletteList>
            <Scroll>
              <ScrollThumb $start={18} $size={17} />
              <Chevron dir="up" />
              <Chevron dir="down" />
            </Scroll>
          </PaletteFrame>
          <RightStatus>Pages: 160/160  Comp: 190</RightStatus>
        </RightColumn>
      </Body>
    </Root>
  );
}
